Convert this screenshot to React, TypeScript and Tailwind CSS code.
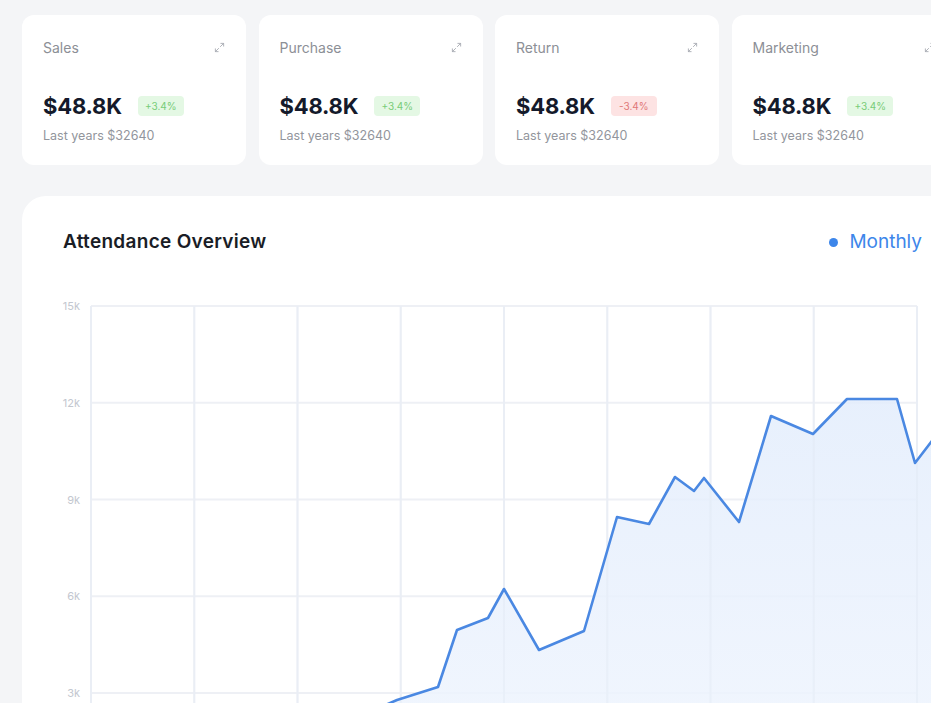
import React from "react";
import { Maximize2 } from "lucide-react";

const cards = [
  { title: "Sales", badge: "+3.4%", up: true },
  { title: "Purchase", badge: "+3.4%", up: true },
  { title: "Return", badge: "-3.4%", up: false },
  { title: "Marketing", badge: "+3.4%", up: true },
];

const pts: [number, number][] = [
  [360, 716],
  [397, 700],
  [438, 687],
  [457, 630],
  [488, 618],
  [504, 589],
  [539, 650],
  [584, 631],
  [617, 517],
  [649, 524],
  [675, 477],
  [694, 491],
  [704, 478],
  [739, 522],
  [771, 416],
  [813, 434],
  [847, 399],
  [897, 399],
  [915, 463],
  [935, 437],
];

function Chart() {
  const ox = 22;
  const oy = 256;
  const vx = Array.from({ length: 9 }, (_, i) => 91 + i * 103.25);
  const hy = Array.from({ length: 6 }, (_, i) => 306 + i * 96.75);
  const labels = ["15k", "12k", "9k", "6k", "3k"];
  const line = pts.map((p, i) => `${i === 0 ? "M" : "L"}${p[0]} ${p[1]}`).join(" ");
  const area = `${line} L935 820 L360 820 Z`;
  return (
    <svg width={940} height={470} className="block">
      <defs>
        <linearGradient id="fillg" x1="0" y1="0" x2="0" y2="1">
          <stop offset="0%" stopColor="#e3edfc" />
          <stop offset="100%" stopColor="#f1f6fe" />
        </linearGradient>
      </defs>
      <g transform={`translate(${-ox},${-oy})`}>
        {hy.map((y) => (
          <line key={"h" + y} x1={91} x2={917} y1={y} y2={y} stroke="#eef0f5" strokeWidth={2} />
        ))}
        {vx.map((x) => (
          <line key={"v" + x} x1={x} x2={x} y1={306} y2={800} stroke="#eef0f5" strokeWidth={2} />
        ))}
        {labels.map((l, i) => (
          <text
            key={l}
            x={80}
            y={hy[i] + 4}
            textAnchor="end"
            fontSize={11}
            fill="#c3c7cf"
            fontFamily="Inter, sans-serif"
          >
            {l}
          </text>
        ))}
        <path d={area} fill="url(#fillg)" opacity={0.85} />
        {vx.map((x) => (
          <line key={"v2" + x} x1={x} x2={x} y1={306} y2={800} stroke="#e4ebf5" strokeWidth={2} opacity={0.35} />
        ))}
        <path d={line} fill="none" stroke="#4a88e2" strokeWidth={2.6} strokeLinejoin="round" strokeLinecap="round" />
      </g>
    </svg>
  );
}

export default function App() {
  return (
    <div
      className="w-[931px] h-[703px] overflow-hidden bg-[#f4f5f7]"
      style={{ fontFamily: "Inter, 'Noto Sans', sans-serif" }}
    >
      <div className="flex gap-[12.5px] pl-[22px] pt-[15px]">
        {cards.map((c) => (
          <div key={c.title} className="w-[224px] h-[150px] shrink-0 rounded-[12px] bg-white px-[21px] pt-[22px]">
            <div className="flex h-5 items-center justify-between">
              <span className="text-[14px] text-[#8c8f96]">{c.title}</span>
              <Maximize2 size={11} strokeWidth={2} className="text-[#a8acb3]" />
            </div>
            <div className="mt-[35px] flex h-7 items-center">
              <span className="text-[22px] font-bold tracking-[-0.2px] text-[#141a2b]">$48.8K</span>
              <span
                className={
                  c.up
                    ? "ml-4 flex h-5 w-[46px] items-center justify-center rounded-[4px] bg-[#e4f8e4] text-[10px] text-[#78cc78]"
                    : "ml-4 flex h-5 w-[46px] items-center justify-center rounded-[4px] bg-[#fde3e3] text-[10px] text-[#e07878]"
                }
              >
                {c.badge}
              </span>
            </div>
            <div className="mt-[7px] h-[18px] text-[12.5px] leading-[18px] text-[#92959c]">Last years $32640</div>
          </div>
        ))}
      </div>
      <div className="ml-[22px] mt-[31px] w-[940px] h-[560px] rounded-[24px] bg-white pt-[32px]">
        <div className="flex h-7 items-center justify-between pl-[41px] pr-[40px]">
          <span className="text-[19px] font-semibold tracking-[0.3px] text-[#1a1d26]">Attendance Overview</span>
          <div className="flex items-center gap-[11px]">
            <span className="h-[9px] w-[9px] rounded-full bg-[#3d86ea]" />
            <span className="text-[19px] text-[#3d86ea]">Monthly</span>
          </div>
        </div>
        <Chart />
      </div>
    </div>
  );
}
